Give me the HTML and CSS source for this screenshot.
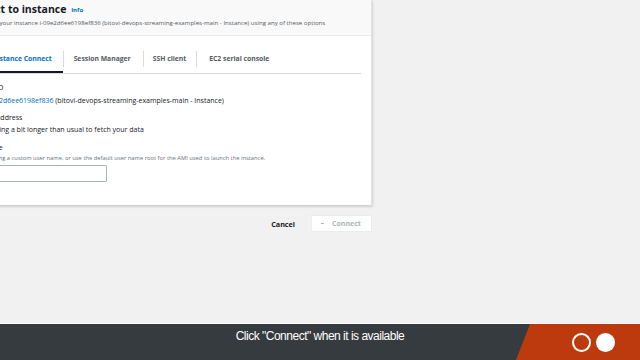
FILE: index.html
```html
<!DOCTYPE html>
<html lang="en">
<head>
  <meta charset="UTF-8">
  <meta name="viewport" content="width=device-width, initial-scale=1.0">
  <title>Connect to instance</title>
  <link rel="stylesheet" href="styles.css">
</head>
<body>
  <div class="stage">
    <div class="card">
      <div class="card-header">
        <h1>Connect to instance <span class="info">Info</span></h1>
        <p class="subtitle">Connect to your instance i-09e2d6ee6198ef836 (bitovi-devops-streaming-examples-main - Instance) using any of these options</p>
      </div>

      <div class="tabs">
        <div class="tab active">EC2 Instance Connect</div>
        <div class="tab">Session Manager</div>
        <div class="tab">SSH client</div>
        <div class="tab">EC2 serial console</div>
      </div>

      <div class="fields">
        <div class="field">
          <div class="label">Instance ID</div>
          <div class="value value-id"><span class="link">i-09e2d6ee6198ef836</span> (bitovi-devops-streaming-examples-main - Instance)</div>
        </div>
        <div class="field">
          <div class="label">Public IP address</div>
          <div class="value">We're having a bit longer than usual to fetch your data</div>
        </div>
        <div class="field">
          <div class="label">User name</div>
          <div class="hint">Connect using a custom user name, or use the default user name root for the AMI used to launch the instance.</div>
          <input class="text-input" type="text">
        </div>
      </div>
    </div>

    <div class="actions">
      <button class="btn-link">Cancel</button>
      <button class="btn-disabled"><span class="spinner"></span>Connect</button>
    </div>
  </div>

  <!-- Tutorial caption bar -->
  <div class="caption">
    <div class="caption-text">Click "Connect" when it is available</div>
    <div class="caption-brand">
      <span class="dot ring"></span>
      <span class="dot filled"></span>
    </div>
  </div>
</body>
</html>
```

FILE: styles.css
```css
/* Reset */
* {
  margin: 0;
  padding: 0;
  box-sizing: border-box;
}
body {
  font-family: "Open Sans", "Noto Sans", sans-serif;
  background-color: #f1f1f1;
  color: #16191f;
  width: 640px;
  height: 360px;
  overflow: hidden;
}

.stage {
  height: 323px;
}

/* Card */
.card {
  width: 417px;
  margin-left: -45px;
  background: #fff;
  border-right: 1px solid #e2e2e2;
  border-bottom: 1px solid #cfd3d4;
  box-shadow: 1px 1px 2px rgba(0, 0, 0, 0.12);
  padding-bottom: 16px;
}

.card-header {
  background: #f9f9f9;
  border-bottom: 1px solid #ececec;
  height: 36px;
  padding: 2px 12px 0;
}
h1 {
  font-size: 10.5px;
  font-weight: 700;
  line-height: 14px;
  margin-left: -5px;
}
.info {
  font-size: 6px;
  color: #0073bb;
  margin-left: 2px;
  vertical-align: 1px;
}
.subtitle {
  font-size: 6.1px;
  color: #545b64;
  line-height: 12px;
  white-space: nowrap;
}

/* Tabs */
.tabs {
  display: flex;
  margin: 9px 10px 0 13px;
  border-bottom: 1px solid #d5dbdb;
}
.tab {
  font-size: 6.8px;
  font-weight: 700;
  color: #545b64;
  height: 28px;
  line-height: 28px;
  padding: 0 11px;
  position: relative;
}
.tab + .tab::before {
  content: "";
  position: absolute;
  left: 0;
  top: 6px;
  height: 16px;
  border-left: 1px solid #d5dbdb;
}
.tab:nth-child(2) { padding: 0 12px 0 11px; }
.tab:nth-child(3) { padding: 0 10px; }
.tab:nth-child(4) { padding: 0 12px 0 13px; }
.tab.active {
  color: #0073bb;
  box-shadow: inset 0 -2px 0 #16191f;
}

/* Fields */
.fields {
  padding: 9px 12px 0;
}
.field {
  margin-bottom: 7px;
}
.field:nth-child(2) {
  margin-bottom: 8px;
}
.label {
  font-size: 7px;
  line-height: 10px;
}
.field:nth-child(2) .label {
  margin-top: 1px;
}
.value {
  font-size: 7px;
  line-height: 10px;
  margin-top: 2.5px;
  white-space: nowrap;
}
.value-id {
  padding-left: 16px;
}
.link {
  color: #0073bb;
}
.hint {
  font-size: 5.8px;
  color: #687078;
  line-height: 10px;
  white-space: nowrap;
}
.text-input {
  display: block;
  width: 140px;
  height: 17px;
  margin-top: 2px;
  border: 1px solid #aab7b8;
  border-radius: 1px;
  background: #fff;
}

/* Actions */
.actions {
  display: flex;
  justify-content: flex-end;
  align-items: center;
  width: 372px;
  margin-top: 9px;
}
.btn-link {
  font-family: inherit;
  font-size: 7.2px;
  font-weight: 700;
  color: #16191f;
  background: none;
  border: none;
  margin-right: 16px;
}
.btn-disabled {
  font-family: inherit;
  font-size: 7px;
  font-weight: 700;
  color: #aab7b8;
  background: #fff;
  border: 1px solid #eaeded;
  width: 61px;
  height: 17px;
  display: flex;
  align-items: center;
  padding-left: 9px;
}
.spinner {
  width: 3px;
  height: 1px;
  background: #aab7b8;
  margin-right: 8px;
}

/* Caption bar */
.caption {
  border-top: 1px solid #fff;
  height: 37px;
  background: #363b40;
  display: flex;
}
.caption-text {
  flex: 1;
  color: #fff;
  font-family: "Liberation Sans", Arial, sans-serif;
  font-size: 12px;
  letter-spacing: -0.5px;
  text-align: center;
  line-height: 25px;
  margin-right: -124px;
}
.caption-brand {
  width: 124px;
  background: #bd3a0f;
  clip-path: polygon(14px 0, 100% 0, 100% 100%, 0 100%);
  display: flex;
  align-items: center;
  padding-left: 56px;
  gap: 5px;
  padding-top: 1px;
}
.dot {
  width: 19px;
  height: 19px;
  border-radius: 50%;
}
.dot.ring {
  border: 2.5px solid #fff;
}
.dot.filled {
  background: #fff;
}
```
